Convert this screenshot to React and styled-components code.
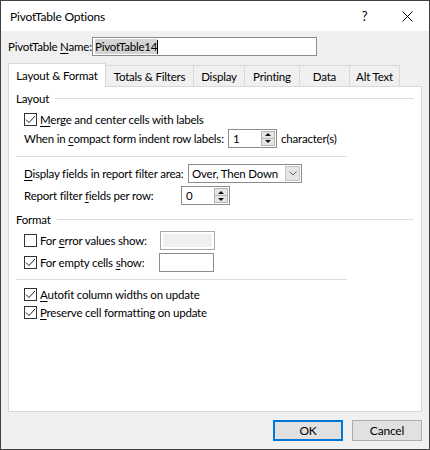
import styled, { createGlobalStyle } from 'styled-components';

const GlobalStyle = createGlobalStyle`
  html, body {
    margin: 0;
    padding: 0;
    background: #ffffff;
  }
  body {
    font-family: 'Segoe UI', Lato, 'Noto Sans', sans-serif;
    font-size: 11.5px;
    letter-spacing: -0.2px;
    color: #000;
  }
`;

const Window = styled.div`
  box-sizing: border-box;
  width: 430px;
  height: 450px;
  border: 1px solid #424242;
  background: #f0f0f0;
  display: flex;
  flex-direction: column;
`;

const TitleBar = styled.div`
  height: 30px;
  flex-shrink: 0;
  background: #ffffff;
  display: flex;
  align-items: center;
  padding-left: 9px;
`;

const Title = styled.div`
  font-size: 12px;
`;

const TitleButtons = styled.div`
  margin-left: auto;
  display: flex;
  height: 100%;
`;

const TitleButton = styled.div`
  width: 43px;
  height: 100%;
  display: flex;
  align-items: center;
  justify-content: center;
  font-size: 13px;
`;

const Body = styled.div`
  flex: 1;
  display: flex;
  flex-direction: column;
  padding: 6px 7px 0;
`;

const NameRow = styled.div`
  display: flex;
  align-items: center;
  height: 19px;
`;

const NameLabel = styled.div`
  width: 84px;
  white-space: nowrap;
`;

const NameInput = styled.div`
  box-sizing: border-box;
  width: 225px;
  height: 19px;
  border: 1px solid #8c8c8c;
  background: #fff;
  display: flex;
  align-items: center;
  padding-left: 2px;
`;

const Selected = styled.span`
  background: #d3d3d3;
  line-height: 15px;
`;

const Caret = styled.span`
  display: inline-block;
  width: 1px;
  height: 14px;
  background: #000;
`;

const TabBar = styled.div`
  margin-top: 7px;
  height: 23px;
  display: flex;
  align-items: flex-start;
  position: relative;
  z-index: 1;
`;

const Tab = styled.div`
  box-sizing: border-box;
  width: ${(p) => p.$w}px;
  height: ${(p) => (p.$active ? 24 : 21)}px;
  margin-top: ${(p) => (p.$active ? 0 : 2)}px;
  margin-left: ${(p) => (p.$first ? 0 : -1)}px;
  border: 1px solid #d9d9d9;
  border-bottom: none;
  background: ${(p) => (p.$active ? '#ffffff' : '#f0f0f0')};
  display: flex;
  align-items: center;
  justify-content: center;
  white-space: nowrap;
  position: relative;
  z-index: ${(p) => (p.$active ? 2 : 1)};
`;

const Panel = styled.div`
  flex: 1;
  background: #ffffff;
  border: 1px solid #d9d9d9;
  padding: 3px 7px 0;
  display: flex;
  flex-direction: column;
`;

const GroupHeader = styled.div`
  display: flex;
  align-items: center;
  height: 16px;
  margin-top: ${(p) => p.$mt || 0}px;
`;

const HeaderLine = styled.div`
  flex: 1;
  height: 1px;
  background: #dcdcdc;
  margin-left: 6px;
`;

const Separator = styled.div`
  width: 331px;
  height: 1px;
  background: #dcdcdc;
  margin-top: ${(p) => p.$mt || 0}px;
`;

const Row = styled.div`
  display: flex;
  align-items: center;
  height: ${(p) => p.$h}px;
  margin-top: ${(p) => p.$mt || 0}px;
  padding-left: 8px;
  white-space: nowrap;
`;

const Label = styled.div`
  width: ${(p) => (p.$w ? `${p.$w}px` : 'auto')};
  margin-left: ${(p) => p.$ml || 0}px;
  white-space: nowrap;
`;

const Accel = styled.span`
  text-decoration: underline;
  text-underline-offset: 2px;
`;

const Box = styled.div`
  box-sizing: border-box;
  width: 13px;
  height: 13px;
  border: 1px solid #333333;
  background: #fff;
  margin-right: 3px;
  display: flex;
  align-items: center;
  justify-content: center;
`;

const Spinner = styled.div`
  box-sizing: border-box;
  width: 49px;
  height: 19px;
  border: 1px solid #8c8c8c;
  background: #fff;
  display: flex;
`;

const Value = styled.div`
  flex: 1;
  padding-left: 4px;
  display: flex;
  align-items: center;
`;

const SpinArea = styled.div`
  box-sizing: border-box;
  width: 14px;
  margin: 1px 1px 1px 0;
  border: 1px solid #b4b4b4;
  background: #e6e6e6;
  display: flex;
  flex-direction: column;
`;

const SpinHalf = styled.div`
  flex: 1;
  display: flex;
  align-items: center;
  justify-content: center;
  border-top: ${(p) => (p.$down ? '1px solid #b4b4b4' : 'none')};
`;

const Arrow = styled.span`
  width: 0;
  height: 0;
  border-left: 3px solid transparent;
  border-right: 3px solid transparent;
  ${(p) =>
    p.$down ? 'border-top: 3px solid #111;' : 'border-bottom: 3px solid #111;'}
`;

const Select = styled.div`
  box-sizing: border-box;
  width: 114px;
  height: 19px;
  border: 1px solid #8c8c8c;
  background: #fff;
  display: flex;
`;

const SelectValue = styled.div`
  flex: 1;
  padding-left: 3px;
  display: flex;
  align-items: center;
`;

const DropButton = styled.div`
  box-sizing: border-box;
  width: 15px;
  margin: 1px;
  border: 1px solid #c4c4c4;
  background: #e5e5e5;
  display: flex;
  align-items: center;
  justify-content: center;
`;

const TextBox = styled.div`
  box-sizing: border-box;
  width: 55px;
  height: 19px;
  border: 1px solid ${(p) => (p.$disabled ? '#a8a8a8' : '#8c8c8c')};
  background: ${(p) => (p.$disabled ? '#efefef' : '#ffffff')};
  box-shadow: ${(p) => (p.$disabled ? 'inset 0 0 0 2px #ffffff' : 'none')};
`;

const Footer = styled.div`
  height: 37px;
  flex-shrink: 0;
  display: flex;
  justify-content: flex-end;
  align-items: flex-start;
  padding-top: 8px;
  box-sizing: border-box;
  gap: 9px;
`;

const Button = styled.button`
  box-sizing: border-box;
  width: 70px;
  height: 21px;
  padding: 0;
  margin: 0;
  font-family: inherit;
  font-size: 12px;
  letter-spacing: inherit;
  color: #000;
  background: #e1e1e1;
  border: ${(p) => (p.$primary ? '2px solid #0078d7' : '1px solid #adadad')};
`;

const Check = () => (
  <svg width="11" height="11" viewBox="0 0 11 11">
    <polyline points="1,5.6 4,8.6 10,2" fill="none" stroke="#222" strokeWidth="1" />
  </svg>
);

const CheckBox = ({ checked }) => <Box>{checked && <Check />}</Box>;

const SpinBox = ({ value }) => (
  <Spinner>
    <Value>{value}</Value>
    <SpinArea>
      <SpinHalf>
        <Arrow />
      </SpinHalf>
      <SpinHalf $down>
        <Arrow $down />
      </SpinHalf>
    </SpinArea>
  </Spinner>
);

const tabs = [
  { label: 'Layout & Format', w: 98, active: true },
  { label: 'Totals & Filters', w: 89 },
  { label: 'Display', w: 52 },
  { label: 'Printing', w: 56 },
  { label: 'Data', w: 51 },
  { label: 'Alt Text', w: 51 },
];

const App = () => (
  <>
    <GlobalStyle />
    <Window>
      <TitleBar>
        <Title>PivotTable Options</Title>
        <TitleButtons>
          <TitleButton>?</TitleButton>
          <TitleButton>
            <svg width="11" height="11" viewBox="0 0 11 11">
              <path d="M0.5 0.5 L10.5 10.5 M10.5 0.5 L0.5 10.5" stroke="#000" strokeWidth="1" />
            </svg>
          </TitleButton>
        </TitleButtons>
      </TitleBar>
      <Body>
        <NameRow>
          <NameLabel>
            PivotTable <Accel>N</Accel>ame:
          </NameLabel>
          <NameInput>
            <Selected>PivotTable14</Selected>
            <Caret />
          </NameInput>
        </NameRow>

        <TabBar>
          {tabs.map((t, i) => (
            <Tab key={t.label} $w={t.w} $active={t.active} $first={i === 0}>
              {t.label}
            </Tab>
          ))}
        </TabBar>

        <Panel>
          <GroupHeader>
            Layout
            <HeaderLine />
          </GroupHeader>
          <Row $h={18} $mt={4}>
            <CheckBox checked />
            <Label>
              <Accel>M</Accel>erge and center cells with labels
            </Label>
          </Row>
          <Row $h={20}>
            <Label $w={204}>
              When in <Accel>c</Accel>ompact form indent row labels:
            </Label>
            <SpinBox value="1" />
            <Label $ml={4}>character(s)</Label>
          </Row>
          <Separator $mt={8} />
          <Row $h={19} $mt={7}>
            <Label $w={164}>
              <Accel>D</Accel>isplay fields in report filter area:
            </Label>
            <Select>
              <SelectValue>Over, Then Down</SelectValue>
              <DropButton>
                <svg width="8" height="5" viewBox="0 0 8 5">
                  <polyline points="0.5,0.5 4,4 7.5,0.5" fill="none" stroke="#606060" strokeWidth="1" />
                </svg>
              </DropButton>
            </Select>
          </Row>
          <Row $h={19} $mt={3}>
            <Label $w={157}>
              Report filter <Accel>f</Accel>ields per row:
            </Label>
            <SpinBox value="0" />
          </Row>

          <GroupHeader $mt={6}>
            Format
            <HeaderLine />
          </GroupHeader>
          <Row $h={20} $mt={3}>
            <CheckBox />
            <Label $w={120}>
              For <Accel>e</Accel>rror values show:
            </Label>
            <TextBox $disabled />
          </Row>
          <Row $h={20} $mt={2}>
            <CheckBox checked />
            <Label $w={119}>
              For empty cells <Accel>s</Accel>how:
            </Label>
            <TextBox />
          </Row>
          <Separator $mt={7} />
          <Row $h={18} $mt={5}>
            <CheckBox checked />
            <Label>
              <Accel>A</Accel>utofit column widths on update
            </Label>
          </Row>
          <Row $h={18}>
            <CheckBox checked />
            <Label>
              <Accel>P</Accel>reserve cell formatting on update
            </Label>
          </Row>
        </Panel>

        <Footer>
          <Button $primary>OK</Button>
          <Button>Cancel</Button>
        </Footer>
      </Body>
    </Window>
  </>
);

export default App;
